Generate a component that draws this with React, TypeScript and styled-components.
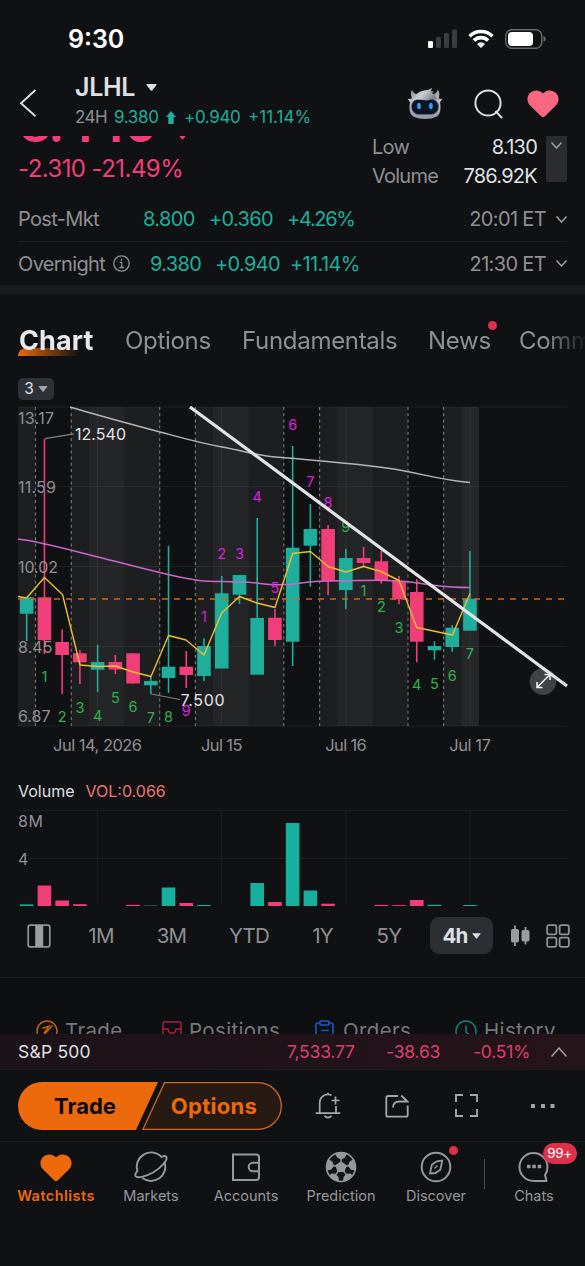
import React from "react";
import styled, { createGlobalStyle } from "styled-components";

const c = {
  bg: "#101113",
  text: "#dfe0e3",
  muted: "#8f9094",
  line: "#1c1d20",
  up: "#1fae9c",
  down: "#f03f78",
  orange: "#ec6a0b",
  red: "#de2f4b",
};

const GlobalStyle = createGlobalStyle`
  * { box-sizing: border-box; }
  body {
    margin: 0;
    background: ${c.bg};
    color: ${c.text};
    font-family: Inter, "Liberation Sans", sans-serif;
  }
  svg { display: block; flex: none; }
`;

const Screen = styled.main`
  width: 585px;
  height: 1266px;
  overflow: hidden;
  display: flex;
  flex-direction: column;
  background: ${c.bg};
`;

/* ---------- status bar ---------- */
const StatusBar = styled.div`
  height: 72px;
  flex: none;
  display: flex;
  align-items: center;
  padding: 6px 38px 0 68px;
`;
const Clock = styled.div`
  flex: 1;
  font-size: 25px;
  font-weight: 600;
  line-height: 30px;
  color: #fff;
`;

/* ---------- header ---------- */
const Header = styled.header`
  height: 64px;
  flex: none;
  display: flex;
  align-items: flex-start;
  padding-left: 18px;
`;
const BackSlot = styled.div`
  width: 57px;
  padding-top: 17px;
`;
const TitleBlock = styled.div`
  flex: 1;
`;
const Ticker = styled.div`
  display: flex;
  align-items: center;
  gap: 11px;
  height: 30px;
  font-size: 25px;
  font-weight: 600;
  letter-spacing: -0.3px;
`;
const SubQuote = styled.div`
  display: flex;
  align-items: center;
  height: 30px;
  font-size: 17px;
  line-height: 20px;
  letter-spacing: -0.35px;
  color: ${c.up};
  white-space: nowrap;
`;
const Session = styled.span`
  color: ${c.muted};
  width: 39px;
  letter-spacing: -0.6px;
`;
const SubItem = styled.span<{ $w: number }>`
  width: ${(p) => p.$w}px;
`;
const SubPercent = styled.span`
  letter-spacing: 0;
`;
const HeaderIcons = styled.div`
  display: flex;
  align-items: center;
  height: 63px;
  padding-right: 26px;
`;
const IconGap = styled.div<{ $w: number }>`
  width: ${(p) => p.$w}px;
`;

/* ---------- quote ---------- */
const Quote = styled.section`
  height: 61px;
  flex: none;
  overflow: hidden;
  display: flex;
  padding-left: 18px;
`;
const PriceCol = styled.div`
  width: 354px;
  color: ${c.down};
`;
const BigPrice = styled.div`
  display: flex;
  align-items: center;
  gap: 20px;
  height: 46px;
  margin-top: -34px;
  padding-left: 2px;
  font-size: 47px;
  line-height: 46px;
  font-weight: 700;
  letter-spacing: -1px;
`;
const PriceArrow = styled.span`
  padding-top: 20px;
`;
const Change = styled.div`
  margin-top: 4px;
  font-size: 24px;
  line-height: 34px;
  letter-spacing: -0.57px;
  white-space: nowrap;
`;
const Stats = styled.div`
  width: 165px;
  margin-top: -3px;
`;
const StatRow = styled.div`
  display: flex;
  justify-content: space-between;
  font-size: 20px;
  line-height: 29px;
  letter-spacing: -0.75px;
`;
const StatLabel = styled.span`
  color: ${c.muted};
`;
const Expander = styled.div`
  width: 21px;
  height: 46px;
  margin-left: 9px;
  padding: 6px 0 0 5px;
  border-radius: 0 0 2px 2px;
  background: #2b2c30;
`;

/* ---------- extended hours ---------- */
const HoursRow = styled.div<{ $cols: string; $h: number; $rule?: boolean }>`
  display: grid;
  grid-template-columns: ${(p) => p.$cols} 1fr auto 11px;
  align-items: center;
  height: ${(p) => p.$h}px;
  flex: none;
  margin: 0 18px;
  border-bottom: ${(p) => (p.$rule ? `1px solid ${c.line}` : "none")};
  font-size: 20px;
  letter-spacing: -0.65px;
  color: ${c.up};
  white-space: nowrap;
`;
const HoursLabel = styled.span`
  display: flex;
  align-items: center;
  gap: 8px;
  color: ${c.muted};
`;
const HoursTime = styled.span`
  color: ${c.muted};
  margin-right: 10px;
`;
const Tight = styled.span`
  letter-spacing: -1.3px;
`;
const Band = styled.div`
  height: 9px;
  flex: none;
  background: #1a1b1d;
`;

/* ---------- tabs ---------- */
const Tabs = styled.nav`
  height: 84px;
  flex: none;
  display: flex;
  align-items: flex-start;
  padding: 27px 0 0 18px;
  overflow: hidden;
  font-size: 24px;
  line-height: 40px;
  letter-spacing: -0.3px;
  color: ${c.muted};
  white-space: nowrap;
  mask-image: linear-gradient(90deg, #000 545px, transparent 588px);
`;
const Tab = styled.div<{ $w: number }>`
  position: relative;
  flex: none;
  width: ${(p) => p.$w}px;
`;
const ActiveTab = styled(Tab)`
  font-size: 27px;
  font-weight: 700;
  letter-spacing: 0.1px;
  color: #e8e9ec;
  z-index: 0;
  padding-left: 1px;
  &::before {
    content: "";
    position: absolute;
    z-index: -1;
    left: 0;
    top: 27px;
    width: 62px;
    height: 8px;
    border-radius: 8px 0 0 0;
    background: linear-gradient(90deg, ${c.orange}, rgba(236, 106, 11, 0));
  }
`;
const NewsDot = styled.i`
  position: absolute;
  left: 60px;
  top: 0;
  width: 9px;
  height: 9px;
  border-radius: 50%;
  background: ${c.red};
`;

/* ---------- chart ---------- */
const IndicatorChip = styled.div`
  display: flex;
  align-items: center;
  justify-content: center;
  gap: 4px;
  flex: none;
  width: 36px;
  height: 22px;
  margin-left: 18px;
  border-radius: 5px;
  background: #2d3035;
  font-size: 15.5px;
  line-height: 22px;
`;
const VolumeHead = styled.div`
  height: 48px;
  flex: none;
  display: flex;
  gap: 11px;
  padding: 18px 0 0 18px;
  font-size: 16px;
  line-height: 30px;
  letter-spacing: 0;
`;
const VolumeValue = styled.span`
  color: #ee7672;
`;
const Ranges = styled.div`
  display: grid;
  grid-template-columns: 42px 82px 59px 96px 51px 82px 63px 54px 21px;
  align-items: center;
  justify-items: center;
  height: 68px;
  flex: none;
  padding: 0 17px 16px 18px;
  border-bottom: 1px solid ${c.line};
  font-size: 20.5px;
  letter-spacing: -0.8px;
  color: ${c.muted};
`;
const RangeActive = styled.div`
  display: flex;
  align-items: center;
  justify-content: center;
  gap: 4px;
  width: 63px;
  height: 37px;
  border-radius: 9px;
  background: #2b2e33;
  color: ${c.text};
  font-weight: 700;
`;

/* ---------- shortcuts ---------- */
const Shortcuts = styled.section`
  height: 56px;
  flex: none;
  overflow: hidden;
  display: grid;
  grid-template-columns: 126px 153px 140px 1fr;
  padding: 33px 0 0 36px;
  background: #0e0f11;
  color: #77787c;
  font-size: 20.5px;
  letter-spacing: 0.35px;
`;
const Shortcut = styled.div<{ $gap?: number }>`
  display: flex;
  align-items: center;
  gap: ${(p) => p.$gap ?? 7}px;
  height: 40px;
`;
const ShortcutText = styled.span`
  line-height: 40px;
`;

/* ---------- index ticker ---------- */
const IndexBar = styled.div`
  display: grid;
  grid-template-columns: 269px 99px 87px 1fr auto;
  align-items: center;
  height: 36px;
  flex: none;
  padding: 0 18px;
  border-bottom: 1px solid ${c.line};
  background: linear-gradient(90deg, #1b1318, #25141a);
  font-size: 17.5px;
  letter-spacing: -0.2px;
  color: #dc3f6e;
`;
const IndexName = styled.span`
  color: ${c.text};
  letter-spacing: 0.2px;
`;

/* ---------- trade actions ---------- */
const Actions = styled.div`
  display: flex;
  align-items: center;
  height: 72px;
  flex: none;
  padding-left: 18px;
  border-bottom: 1px solid ${c.line};
`;
const TradeSwitch = styled.div`
  position: relative;
  width: 264px;
  height: 48px;
`;
const SwitchLabels = styled.div`
  position: absolute;
  inset: 0;
  display: grid;
  grid-template-columns: 134px 124px;
  align-items: center;
  text-align: center;
  font-size: 22px;
  font-weight: 700;
  color: ${c.orange};
`;
const TradeText = styled.span`
  color: #0b0b0c;
`;
const OptionsText = styled.span`
  letter-spacing: 0.3px;
`;
const ActionSlot = styled.div<{ $w: number }>`
  display: flex;
  justify-content: center;
  width: ${(p) => p.$w}px;
`;

/* ---------- bottom navigation ---------- */
const BottomNav = styled.nav`
  display: grid;
  grid-template-columns: repeat(5, 95px) 2px 97px;
  padding: 8px 0 0 8.5px;
  flex: none;
  height: 124px;
`;
const NavItem = styled.div<{ $active?: boolean }>`
  position: relative;
  display: flex;
  flex-direction: column;
  align-items: center;
  height: 60px;
  color: ${(p) => (p.$active ? c.orange : "#97989c")};
  font-size: 14.5px;
  font-weight: ${(p) => (p.$active ? 600 : 400)};
  letter-spacing: ${(p) => (p.$active ? "0.45px" : "0")};
  line-height: 20px;
  gap: 2px;
`;
const NavDivider = styled.div`
  width: 1px;
  height: 30px;
  margin-top: 9px;
  background: #4b4c50;
`;
const NavDot = styled.i`
  position: absolute;
  left: 60px;
  top: -4px;
  width: 9px;
  height: 9px;
  border-radius: 50%;
  background: ${c.red};
`;
const NavBadge = styled.span`
  position: absolute;
  left: 57px;
  top: -7px;
  width: 34px;
  height: 21px;
  border-radius: 11px;
  background: ${c.red};
  color: #fff;
  font-size: 13.5px;
  line-height: 21px;
  letter-spacing: -0.4px;
  text-align: center;
`;

/* ---------- icons ---------- */
const Caret = ({ w = 11, h = 7, color = c.text }: { w?: number; h?: number; color?: string }) => (
  <svg width={w} height={h} viewBox="0 0 11 7">
    <path d="M1 0h9q1 0 .5.9L6.2 6.4q-.7.8-1.4 0L.5.9Q0 0 1 0z" fill={color} />
  </svg>
);
const Chevron = ({ up = false, w = 11, h = 7, color = "#a2a3a7" }) => (
  <svg width={w} height={h} viewBox={`0 0 ${w} ${h}`} fill="none" stroke={color} strokeWidth="1.5">
    <path d={up ? `M.5 ${h - 0.5}L${w / 2} 1l${w / 2 - 0.5} ${h - 1.5}` : `M.5 .5l${w / 2 - 0.5} ${h - 1.5}L${w - 0.5} .5`} />
  </svg>
);
const Signal = () => (
  <svg width="30" height="20" viewBox="0 0 30 20">
    <rect x="0" y="12" width="5" height="7" rx="1.3" fill="#fff" />
    <rect x="8" y="8" width="5" height="11" rx="1.3" fill="#3b3c3e" />
    <rect x="16" y="4" width="5" height="15" rx="1.3" fill="#3b3c3e" />
    <rect x="24" y="0.5" width="5" height="18.5" rx="1.3" fill="#3b3c3e" />
  </svg>
);
const Wifi = () => (
  <svg width="26" height="20" viewBox="0 0 26 20">
    <g fill="none" stroke="#fff" strokeWidth="3.6">
      <path d="M1.6 7.2a16.2 16.2 0 0 1 22.8 0" />
      <path d="M5.9 11.6a10 10 0 0 1 14.2 0" />
    </g>
    <path d="M13 19l-4-4.1a5.8 5.8 0 0 1 8 0z" fill="#fff" />
  </svg>
);
const Battery = () => (
  <svg width="42" height="20" viewBox="0 0 42 20">
    <rect x=".8" y=".8" width="36" height="18.4" rx="6" fill="none" stroke="#68696b" strokeWidth="1.4" />
    <rect x="3" y="3" width="25" height="14" rx="4" fill="#fff" />
    <path d="M38.500 7q2.400 1 2.400 3t-2.400 3z" fill="#68696b" />
  </svg>
);
const Robot = () => (
  <svg width="36" height="32" viewBox="0 0 36 32">
    <defs>
      <linearGradient id="shell" x1="0" y1="0" x2="0" y2="1">
        <stop offset="0" stopColor="#8e919b" />
        <stop offset=".4" stopColor="#c0c2cb" />
        <stop offset="1" stopColor="#9297a5" />
      </linearGradient>
      <linearGradient id="hair" x1="0" y1="0" x2="1" y2=".4">
        <stop offset="0" stopColor="#9a9da5" />
        <stop offset=".5" stopColor="#cfd0d5" />
        <stop offset="1" stopColor="#7d818a" />
      </linearGradient>
    </defs>
    <path d="M5 1.500q-2 4 0 9l-4.500.5 2.500 3q-2 11 3 14.500 5 2.500 12 2.500t12-2.500q5-3.500 3-14.500l2.500-3-4-.5q2-5-.5-9-1 3-4 5H10Q6 5 5 1.500z" fill="url(#shell)" />
    <rect x="4.500" y="11" width="27" height="15.500" rx="7.500" fill="#0d1424" stroke="#5b6578" strokeWidth=".8" />
    <path d="M5.500 12Q8 4 17 2.500q5-.5 8-2.500-.5 2.500-1.500 3.500l3-.5-1.300 2Q28 7 30.500 12q-4-1.500-7-.5-3 1.500-7 .5-5-1-11 0z" fill="url(#hair)" />
    <ellipse cx="12" cy="18" rx="1.900" ry="3.200" fill="#2f9fea" />
    <ellipse cx="23.900" cy="18" rx="1.900" ry="3.200" fill="#2f9fea" />
  </svg>
);
const SearchIcon = () => (
  <svg width="30" height="30" viewBox="0 0 30 30" fill="none" stroke="#dcdde0" strokeWidth="2">
    <circle cx="14" cy="14" r="12.600" />
    <path d="M21.500 22l6.500 7" />
  </svg>
);
const Heart = ({ fill, w = 32, h = 28 }: { fill: string; w?: number; h?: number }) => (
  <svg width={w} height={h} viewBox="0 0 32 28">
    <path d="M16 3.500C12.500-.6 6.200-.3 3 3c-3.600 3.800-3.200 9 0 12.200l11.300 11.300q1.700 1.600 3.400 0L29 15.200C32.200 12 32.600 6.800 29 3c-3.200-3.300-9.500-3.600-13 .5z" fill={fill} />
  </svg>
);
const InfoIcon = () => (
  <svg width="17" height="17" viewBox="0 0 17 17" fill="none" stroke="#8f9094" strokeWidth="1.300">
    <circle cx="8.500" cy="8.500" r="7.700" />
    <path d="M6.700 7.300h2v5M6.300 12.500h4.600M8.500 4v1.800" />
  </svg>
);

/* ---------- candle data: [top, bottom, high, low, rising] in chart units ---------- */
type Candle = [number, number, number, number, 0 | 1];
const candles: Candle[] = [
  [597.3, 613.7, 597, 641, 1], [597.3, 640.3, 439, 654, 0], [642, 655, 629.3, 694, 0],
  [653.3, 662.3, 650, 684, 0], [662, 669.7, 644.7, 692, 1], [662, 669.5, 655, 674, 0],
  [653.3, 683.5, 653.3, 683.5, 0], [681, 685.3, 676.7, 694, 1], [666.7, 678, 545.7, 693, 1],
  [666.7, 675, 651, 688, 0], [646, 676, 638.3, 681, 1], [593.3, 668.5, 576, 668, 1],
  [575, 594.7, 575, 604, 1], [618, 674.7, 518, 674, 1], [617.7, 640, 609, 646, 0],
  [547.7, 641.7, 446, 666, 1], [529, 545.7, 504, 586.7, 1], [529, 581, 525, 595.3, 0],
  [558, 590, 549, 609, 1], [558, 563, 547, 566.7, 0], [561.3, 580.7, 551, 583.7, 0],
  [581, 599.3, 576, 604.3, 0], [592, 641.7, 579, 662.3, 0], [646, 650.3, 641.3, 659.7, 1],
  [627.7, 647, 625, 651.7, 1], [598.7, 630.7, 551, 630, 1],
];
const x0 = 26.7;
const step = 17.73;
const cx = (i: number) => x0 + i * step;

const bands: [number, number, string][] = [
  [18, 17.5, "#1d1e20"], [71, 89, "#1d1e20"], [89, 35, "#242527"],
  [195.3, 88.5, "#1d1e20"], [213, 35.5, "#242527"],
  [319.5, 88.5, "#1d1e20"], [337.3, 35.5, "#242527"],
  [443.5, 17.7, "#1d1e20"], [461.3, 17.7, "#262729"],
];
const sessions = [35.5, 71.3, 159.7, 195.4, 283.8, 319.6, 408, 443.6];
const days: [number, string][] = [[97.6, "Jul 14, 2026"], [221.7, "Jul 15"], [346, "Jul 16"], [470, "Jul 17"]];
/* [candle index, y, count, green] */
const counts: [number, number, string, 0 | 1][] = [
  [1, 677, "1", 1], [2, 717, "2", 1], [3, 707.5, "3", 1], [4, 716, "4", 1], [5, 698, "5", 1],
  [6, 706.5, "6", 1], [7, 717.5, "7", 1], [8, 717, "8", 1], [9, 710.5, "9", 0], [10, 617, "1", 0],
  [11, 554, "2", 0], [12, 554, "3", 0], [13, 497, "4", 0], [14, 588, "5", 0], [15, 425, "6", 0],
  [16, 482, "7", 0], [17, 503, "8", 0], [18, 527, "9", 1], [19, 591, "1", 1], [20, 607, "2", 1],
  [21, 628, "3", 1], [22, 685, "4", 1], [23, 683.5, "5", 1], [24, 676, "6", 1], [25, 653.5, "7", 1],
];
const scale: [string, number, number][] = [
  ["13.17", 418.5, 36], ["11.59", 487.5, 38], ["10.02", 567, 40], ["8.45", 647, 34.5], ["6.87", 716, 32.5],
];

const ChartText = styled.text<{ $size?: number; $color?: string }>`
  font-size: ${(p) => p.$size ?? 16}px;
  fill: ${(p) => p.$color ?? "#8f9094"};
`;

const PriceChart = () => (
  <svg width="585" height="358" viewBox="0 400 585 358">
    {bands.map(([x, w, f]) => <rect key={x} x={x} y="407" width={w} height="319" fill={f} />)}
    <g stroke="#fff" strokeOpacity=".06">
      {[407, 486.7, 566.5, 646.5, 726].map((y) => <path key={y} d={`M18 ${y}H567`} />)}
      {days.map(([x]) => <path key={x} d={`M${x} 407V726`} />)}
    </g>
    <g stroke="#737477" strokeWidth="1.2" strokeDasharray="3 3.2">
      {sessions.map((x) => <path key={x} d={`M${x} 407V726`} />)}
    </g>
    {candles.map(([t, b, hi, lo, up], i) => (
      <g key={i} fill={up ? c.up : c.down}>
        <rect x={cx(i) - 0.8} y={hi} width="1.6" height={lo - hi} />
        <rect x={cx(i) - 6.8} y={t} width={13.6} height={b - t} />
      </g>
    ))}
    <path d="M18 599H567" stroke="#d3661b" strokeWidth="1.5" strokeDasharray="6 6" />
    <path d="M70 407C100 416 130 424 160 432S200 443 222 447 255 455 275 457C300 459 360 464 390 468.500S440 480 470 482.500" fill="none" stroke="#b4b5b7" strokeWidth="1.4" />
    <path d="M18 539C40 541.500 70 550 98 557S140 568 168 574.500 205 581.500 222 581.500 245 581.500 260 583.500 290 585 305 582.500 340 581 360 580.500 390 579.500 410 582 445 587.500 470 587.500" fill="none" stroke="#cc66cc" strokeWidth="1.5" />
    <path d="M18 596.500L26.500 598 44.400 577.500 62.500 594.500 80 665 97.600 666.500 115.500 666 133 672 151 676.500 168.500 635.500 186 640 204 655 221.700 613 239.500 596.500 257 603 275 607.500 292.700 553.500 310.500 551.500 328 566.500 346 572 363.500 566.500 381 571.500 399 580.500 416.700 627.500 452.500 635 470 593.500" fill="none" stroke="#eebf2c" strokeWidth="1.4" strokeLinejoin="round" />
    {counts.map(([i, y, t, green]) => (
      <ChartText key={i} x={cx(i)} y={y + 5.2} textAnchor="middle" $size={14.5} $color={green ? "#2fb14c" : "#dc1fdc"}>{t}</ChartText>
    ))}
    {scale.map(([t, y, w]) => (
      <ChartText key={t} x="18" y={y + 5.8} textLength={w}>{t}</ChartText>
    ))}
    <g fill="none" stroke="#7f8083" strokeWidth="1.2">
      <path d="M45 438.700L74 433.800" />
      <path d="M151 694L180 699.500" />
    </g>
    <ChartText x="75" y="440" textLength="51" $color="#e2e3e6">12.540</ChartText>
    <ChartText x="180.5" y="705.8" textLength="44" $color="#e2e3e6">7.500</ChartText>
    <circle cx="543" cy="681.5" r="13.3" fill="#414244" />
    <path d="M190 407L567 686" stroke="#e2e3e5" strokeWidth="3.2" />
    <path d="M537 687.500L550 674.500M537 682v5.500h5.500M544.500 674.500h5.500v5.500" fill="none" stroke="#eee" strokeWidth="1.6" />
    {days.map(([x, t]) => (
      <ChartText key={t} x={x} y="750.5" textAnchor="middle" $size={16.5} textLength={t.length > 6 ? 89 : 41.5}>{t}</ChartText>
    ))}
  </svg>
);

/* [candle index, bar height, rising] */
const volumes: [number, number, 0 | 1][] = [
  [0, 1.6, 1], [1, 20.5, 0], [2, 5.5, 0], [3, 1.8, 0], [6, 1.2, 0], [7, 0.4, 1], [8, 18.5, 1], [9, 3, 0],
  [10, 1, 1], [13, 23, 1], [14, 4, 0], [15, 83, 1], [16, 15.5, 1], [17, 2.3, 0], [20, 1.1, 0],
  [21, 0.9, 0], [22, 6, 0], [23, 1.2, 1], [25, 1, 1],
];
const VolumeChart = () => (
  <svg width="585" height="104" viewBox="0 806 585 104">
    <g stroke="#1d1e21">
      <path d="M18 810.500H567M30 858.500H567" />
      {days.map(([x]) => <path key={x} d={`M${x} 810V905`} />)}
    </g>
    {volumes.map(([i, h, up]) => (
      <rect key={i} x={cx(i) - 6.8} y={906 - h} width="13.6" height={h} fill={up ? "#17b0a0" : c.down} />
    ))}
    <ChartText x="18" y="827.3" textLength="25">8M</ChartText>
    <ChartText x="18" y="865.3" textLength="9.5">4</ChartText>
  </svg>
);

const PanelIcon = () => (
  <svg width="24" height="24" viewBox="0 0 24 24">
    <rect x="1.2" y="1.2" width="21.6" height="21.6" rx="2" fill="none" stroke="#919296" strokeWidth="1.7" />
    <rect x="8.2" y="1.2" width="8" height="21.6" fill="#9b9ca0" />
  </svg>
);
const CandleIcon = () => (
  <svg width="20" height="22" viewBox="0 0 20 22" fill="#9b9ca0">
    <rect x="4.100" y="0.500" width="1.800" height="20.500" />
    <rect x="14.600" y="2" width="1.800" height="17.500" />
    <rect x="1" y="4" width="8" height="13.500" rx="1.800" />
    <rect x="11.500" y="5" width="8" height="11.500" rx="1.800" />
  </svg>
);
const GridIcon = () => (
  <svg width="24" height="24" viewBox="0 0 24 24" fill="none" stroke="#919296" strokeWidth="1.8">
    <rect x="1.2" y="1.2" width="9.2" height="9.2" rx="1.5" />
    <rect x="13.600" y="1.2" width="9.2" height="9.2" rx="1.5" />
    <rect x="1.2" y="13.600" width="9.2" height="9.2" rx="1.5" />
    <rect x="13.600" y="13.600" width="9.2" height="9.2" rx="1.5" />
  </svg>
);
const TradeIcon = () => (
  <svg width="22" height="22" viewBox="0 0 22 22" fill="none" stroke="#c0600f" strokeWidth="1.5">
    <circle cx="11" cy="11" r="10" />
    <path d="M5 18L16.500 5.500M6.500 8.200L13 6.200l-5 7M16 14l-6 3" />
  </svg>
);
const PositionsIcon = () => (
  <svg width="20" height="22" viewBox="0 0 20 22" fill="none" stroke="#a81f40" strokeWidth="1.5">
    <rect x="1" y="2" width="18" height="18" rx="1" />
    <path d="M1 9h5q0 4 4 4t4-4h5" />
  </svg>
);
const OrdersIcon = () => (
  <svg width="19" height="22" viewBox="0 0 19 22" fill="none" stroke="#1c55bd" strokeWidth="1.7">
    <path d="M5 3H3Q1 3 1 5v14q0 2 2 2h13q2 0 2-2V5q0-2-2-2h-2" />
    <rect x="5" y="1" width="9" height="4" rx="1" />
    <path d="M6 10.500h8M6 14.500h5" />
  </svg>
);
const HistoryIcon = () => (
  <svg width="22" height="22" viewBox="0 0 22 22" fill="none" stroke="#157f77" strokeWidth="1.5">
    <circle cx="11" cy="11" r="10" />
    <path d="M11 5.500V12l4 3" />
  </svg>
);
const SwitchShape = () => (
  <svg width="264" height="48" viewBox="0 0 264 48">
    <path d="M24 0H140L118 48H24A24 24 0 0 1 24 0z" fill={c.orange} />
    <path d="M146.500.7H240a23.300 23.300 0 0 1 0 46.600H125z" fill="#261a12" stroke="#cf6a22" strokeWidth="1.3" />
  </svg>
);
const BellIcon = () => (
  <svg width="26" height="27" viewBox="0 0 26 27" fill="none" stroke="#a5a6aa" strokeWidth="1.7">
    <path d="M16.500 3.200A8.300 8.300 0 0 0 4.700 10.800V21M21 14v7M.7 21.200h24.600M13 .7v2M20.500 4.500v8M16.500 8.500h8" />
    <path d="M9.500 24q3.500 3 7 0" />
  </svg>
);
const ShareIcon = () => (
  <svg width="24" height="24" viewBox="0 0 24 24" fill="none" stroke="#a5a6aa" strokeWidth="1.8">
    <path d="M13 2H3Q1.300 2 1.300 3.700V21q0 1.700 1.700 1.700h18q1.700 0 1.700-1.700V11.500" />
    <path d="M8 13.500q0-6 6.500-6H22.500L16.200 1.500" />
  </svg>
);
const FullscreenIcon = () => (
  <svg width="23" height="23" viewBox="0 0 23 23" fill="none" stroke="#a5a6aa" strokeWidth="1.9">
    <path d="M1 8V1h7M15 1h7v7M22 15v7h-7M8 22H1v-7" />
  </svg>
);
const MoreIcon = () => (
  <svg width="24" height="4" viewBox="0 0 24 4" fill="#a5a6aa">
    <rect x="0" y="0" width="4" height="4" rx=".6" />
    <rect x="10" y="0" width="4" height="4" rx=".6" />
    <rect x="19.500" y="0" width="4" height="4" rx=".6" />
  </svg>
);
const PlanetIcon = () => (
  <svg width="34" height="34" viewBox="0 0 34 34" fill="none" stroke="#97989c" strokeWidth="1.9">
    <path d="M30.600 12.200A14.300 14.300 0 0 1 8.300 28M3.600 21.500A14.300 14.300 0 0 1 28 7.500" />
    <path d="M3.600 21Q.5 24 1.500 26C3 28.500 11 27 19 22.500 27.500 17.500 33.500 10 32.500 7.200 31.800 5.400 29.500 5.800 27.500 7" />
  </svg>
);
const WalletIcon = () => (
  <svg width="30" height="34" viewBox="0 0 30 34" fill="none" stroke="#97989c" strokeWidth="2">
    <path d="M28 12.500V7.500q0-3-3-3H2V30h23q3 0 3-3V21.500M29 12.700h-7a4.300 4.300 0 0 0 0 8.600h7M28 12v10" />
  </svg>
);
const BallIcon = () => (
  <svg width="32" height="34" viewBox="0 0 32 34">
    <circle cx="16" cy="17" r="14.500" fill="#131416" stroke="#97989c" strokeWidth="1.6" />
    <g fill="#97989c">
      <path d="M16 11.200l5.700 4.100-2.200 6.700h-7l-2.200-6.700z" />
      <path d="M10 3.600Q16 1.200 22 3.600L19.700 7.800 16 9.600l-3.700-1.800zM28 9.500Q31 14 30 20.500L26 19.700 23 16 24.700 11.500zM4 9.500Q1 14 2 20.500L6 19.700 9 16 7.300 11.500zM27.300 26Q23.500 31 18 31.400L18.500 27 21.700 23.800l4.300-.2zM4.700 26Q8.500 31 14 31.400L13.500 27 10.300 23.800l-4.300-.2z" />
    </g>
    <path d="M16 8v5M24 15.500l-4 1M8 15.500l4 1M21.500 25l-3-4M10.500 25l3-4" stroke="#97989c" strokeWidth="1.3" />
  </svg>
);
const CompassIcon = () => (
  <svg width="32" height="34" viewBox="0 0 32 34" fill="none" stroke="#97989c" strokeWidth="2">
    <circle cx="16" cy="17" r="14.300" />
    <path d="M22.300 10.500l-2 9.300-4.800 3.200-5.500.5 1.800-8.700 5-3.500z" strokeWidth="1.8" />
    <path d="M14.500 18.500l3-3" strokeWidth="1.3" />
  </svg>
);
const ChatIcon = () => (
  <svg width="32" height="34" viewBox="0 0 32 34" fill="none" stroke="#97989c" strokeWidth="2">
    <path d="M28.500 31H15.500A14 14 0 1 1 29.500 17q0 4.500-2.500 8z" strokeLinejoin="round" />
    <path d="M9 16.500h3.500M14.300 16.500h3.500M19.700 16.500h3.500" strokeWidth="3.3" />
  </svg>
);
const WatchHeart = () => (
  <svg width="32" height="34" viewBox="0 0 32 34">
    <path d="M16 7.500C12.500 3.400 6.200 3.700 3 7c-3.600 3.800-3.200 9 0 12.200l11.300 11.300q1.700 1.600 3.400 0L29 19.200C32.200 16 32.600 10.800 29 7c-3.200-3.300-9.500-3.600-13 .5z" fill={c.orange} />
  </svg>
);

export default function App() {
  return (
    <Screen>
      <GlobalStyle />
      <StatusBar>
        <Clock>9:30</Clock>
        <Signal />
        <IconGap $w={10} />
        <Wifi />
        <IconGap $w={11} />
        <Battery />
      </StatusBar>

      <Header>
        <BackSlot>
          <svg width="20" height="28" viewBox="0 0 20 28" fill="none" stroke="#dcdde0" strokeWidth="1.9">
            <path d="M17.500 1L3 14.300l14.500 13" />
          </svg>
        </BackSlot>
        <TitleBlock>
          <Ticker>JLHL <Caret /></Ticker>
          <SubQuote>
            <Session>24H</Session>
            <SubItem $w={50}>9.380</SubItem>
            <svg width="20" height="13" viewBox="0 0 20 13"><path d="M7 0l5 6H9.700v7H4.300V6H2z" fill={c.up} /></svg>
            <SubItem $w={64}>+0.940</SubItem>
            <SubPercent>+11.14%</SubPercent>
          </SubQuote>
        </TitleBlock>
        <HeaderIcons>
          <Robot />
          <IconGap $w={31} />
          <SearchIcon />
          <IconGap $w={23} />
          <Heart fill="#f96880" />
        </HeaderIcons>
      </Header>

      <Quote>
        <PriceCol>
          <BigPrice>8.440 <PriceArrow><Caret w={13} h={9} color={c.down} /></PriceArrow></BigPrice>
          <Change>-2.310 -21.49%</Change>
        </PriceCol>
        <Stats>
          <StatRow><StatLabel>Low</StatLabel>8.130</StatRow>
          <StatRow><StatLabel>Volume</StatLabel>786.92K</StatRow>
        </Stats>
        <Expander><Chevron /></Expander>
      </Quote>

      <HoursRow $cols="125px 66px 78px" $h={45} $rule>
        <HoursLabel>Post-Mkt</HoursLabel>
        <span>8.800</span>
        <span>+0.360</span>
        <Tight>+4.26%</Tight>
        <HoursTime>20:01 ET</HoursTime>
        <Chevron />
      </HoursRow>
      <HoursRow $cols="132px 65px 75px" $h={43}>
        <HoursLabel>Overnight <InfoIcon /></HoursLabel>
        <span>9.380</span>
        <span>+0.940</span>
        <span>+11.14%</span>
        <HoursTime>21:30 ET</HoursTime>
        <Chevron />
      </HoursRow>
      <Band />

      <Tabs>
        <ActiveTab $w={107}>Chart</ActiveTab>
        <Tab $w={117}>Options</Tab>
        <Tab $w={186}>Fundamentals</Tab>
        <Tab $w={91}>News<NewsDot /></Tab>
        <Tab $w={120}>Comments</Tab>
      </Tabs>
      <IndicatorChip>3 <Caret w={10} h={6} color="#a2a3a7" /></IndicatorChip>
      <PriceChart />
      <VolumeHead>
        <span>Volume</span>
        <VolumeValue>VOL:0.066</VolumeValue>
      </VolumeHead>
      <VolumeChart />
      <Ranges>
        <PanelIcon />
        <span>1M</span>
        <span>3M</span>
        <span>YTD</span>
        <span>1Y</span>
        <span>5Y</span>
        <RangeActive>4h <Caret w={9} h={6} /></RangeActive>
        <CandleIcon />
        <GridIcon />
      </Ranges>

      <Shortcuts>
        <Shortcut><TradeIcon /><ShortcutText>Trade</ShortcutText></Shortcut>
        <Shortcut><PositionsIcon /><ShortcutText>Positions</ShortcutText></Shortcut>
        <Shortcut $gap={9}><OrdersIcon /><ShortcutText>Orders</ShortcutText></Shortcut>
        <Shortcut><HistoryIcon /><ShortcutText>History</ShortcutText></Shortcut>
      </Shortcuts>
      <IndexBar>
        <IndexName>S&amp;P 500</IndexName>
        <span>7,533.77</span>
        <span>-38.63</span>
        <span>-0.51%</span>
        <Chevron up w={16} h={10} />
      </IndexBar>

      <Actions>
        <TradeSwitch>
          <SwitchShape />
          <SwitchLabels>
            <TradeText>Trade</TradeText>
            <OptionsText>Options</OptionsText>
          </SwitchLabels>
        </TradeSwitch>
        <ActionSlot $w={92}><BellIcon /></ActionSlot>
        <ActionSlot $w={46}><ShareIcon /></ActionSlot>
        <ActionSlot $w={93}><FullscreenIcon /></ActionSlot>
        <ActionSlot $w={60}><MoreIcon /></ActionSlot>
      </Actions>

      <BottomNav>
        <NavItem $active><WatchHeart />Watchlists</NavItem>
        <NavItem><PlanetIcon />Markets</NavItem>
        <NavItem><WalletIcon />Accounts</NavItem>
        <NavItem><BallIcon />Prediction</NavItem>
        <NavItem><CompassIcon />Discover<NavDot /></NavItem>
        <NavDivider />
        <NavItem><ChatIcon />Chats<NavBadge>99+</NavBadge></NavItem>
      </BottomNav>
    </Screen>
  );
}
